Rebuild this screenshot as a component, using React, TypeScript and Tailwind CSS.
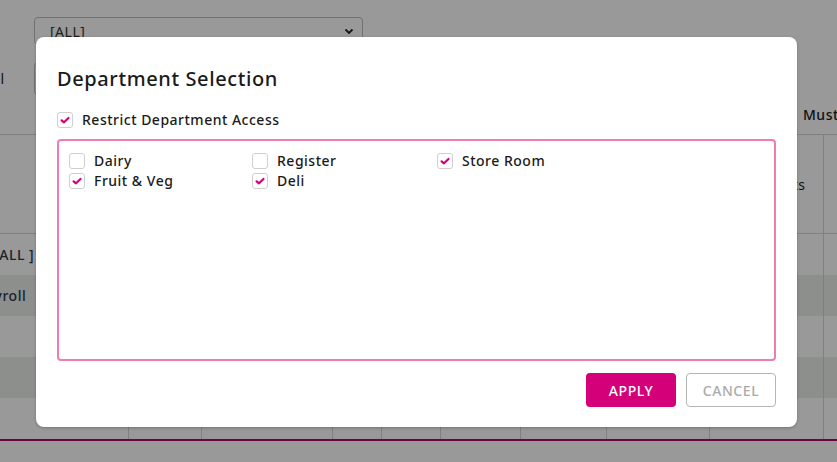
import React from 'react';

const font = { fontFamily: '"Noto Sans", "Open Sans", sans-serif' };

const departments = [
  { name: 'Dairy', checked: false },
  { name: 'Register', checked: false },
  { name: 'Store Room', checked: true },
  { name: 'Fruit & Veg', checked: true },
  { name: 'Deli', checked: true },
];

const columns = [129, 73, 131, 49, 59, 80, 86, 103, 114, 40];

const rows = [
  { label: '[ ALL ]', shade: false },
  { label: 'Payroll', shade: true },
  { label: '', shade: false },
  { label: '', shade: true },
  { label: '', shade: false },
];

function Check({ checked }: { checked: boolean }) {
  return (
    <span className="w-[16px] h-[16px] shrink-0 rounded-[3px] border border-[#cfcfcf] bg-white flex items-center justify-center">
      {checked && (
        <svg width="12" height="12" viewBox="0 0 12 12" fill="none">
          <path d="M2.6 6.3 L5 8.3 L9.5 4" stroke="#d4007a" strokeWidth="2.2" strokeLinecap="round" strokeLinejoin="round" />
        </svg>
      )}
    </span>
  );
}

function BackgroundPage() {
  return (
    <div className="h-[462px] bg-white text-[14px] text-[#222]" style={font}>
      {/* Filters */}
      <div className="pt-[17px] pl-[34px]">
        <div className="w-[329px] h-[28px] border border-[#bdbdbd] rounded-[4px] flex items-center justify-between pl-[15px] pr-[8px]">
          <span className="text-[#333] tracking-[0.5px]">[ALL]</span>
          <svg width="10" height="10" viewBox="0 0 10 10" fill="none">
            <path d="M1.5 3.5 L5 7 L8.5 3.5" stroke="#222" strokeWidth="1.8" />
          </svg>
        </div>
      </div>
      <div className="flex items-center mt-[17px] h-[33px]">
        <div className="w-[4px] flex justify-end overflow-hidden whitespace-nowrap">
          <span>Level</span>
        </div>
        <div className="ml-[30px] w-[329px] h-[33px] border border-[#bdbdbd] rounded-[4px]" />
      </div>
      <div className="h-[39px] flex items-center pl-[803px] whitespace-nowrap font-medium tracking-[0.5px]">Must Work</div>

      {/* Table */}
      <div className="border-t border-[#d5d5d5]">
        <div className="flex h-[99px] border-b border-[#d5d5d5]">
          {columns.map((w, i) => (
            <div
              key={i}
              style={{ width: w }}
              className={`shrink-0 flex items-center justify-center text-center whitespace-nowrap tracking-[0.5px] ${i < columns.length - 1 ? 'border-r border-[#d5d5d5]' : ''}`}
            >
              {i === 8 ? 'Total Shifts' : ''}
            </div>
          ))}
        </div>
        {rows.map((r, ri) => (
          <div key={ri} className={`flex h-[41px] ${r.shade ? 'bg-[#eceeeb]' : 'bg-white'}`}>
            {columns.map((w, i) => (
              <div
                key={i}
                style={{ width: w }}
                className={`shrink-0 flex items-center overflow-hidden whitespace-nowrap ${i < columns.length - 1 ? 'border-r border-[#d5d5d5]' : ''}`}
              >
                {i === 0 && (
                  <span className={`${r.label === 'Payroll' ? '-ml-[23px]' : '-ml-[10px]'} text-[#2b3a50] font-medium tracking-[0.5px]`}>
                    {r.label}
                  </span>
                )}
              </div>
            ))}
          </div>
        ))}
        <div className="h-[2px] bg-[#b0096a]" />
      </div>
    </div>
  );
}

export default function App() {
  return (
    <div className="relative w-[837px] h-[462px] overflow-hidden">
      <BackgroundPage />
      <div className="absolute inset-0 bg-black/40" />

      {/* Modal */}
      <div
        className="absolute left-[36px] top-[37px] w-[761px] h-[390px] bg-white rounded-[8px] shadow-[0_1px_3px_rgba(0,0,0,0.25)] px-[21px] pt-[28px] text-[#1a1a1a]"
        style={font}
      >
        <h2 className="text-[20px] leading-[28px] font-medium tracking-[0.6px]">Department Selection</h2>

        <label className="mt-[19px] flex items-center gap-[9px] text-[14px] leading-[16px] font-medium tracking-[0.5px]">
          <Check checked />
          <span>Restrict Department Access</span>
        </label>

        <div className="mt-[11px] h-[222px] border-2 border-[#ee7db3] rounded-[4px] pt-[12px] pl-[10px]">
          <div className="grid grid-cols-[183px_185px_1fr] gap-y-[4px]">
            {departments.map((d) => (
              <label key={d.name} className="flex items-center gap-[9px] text-[14px] leading-[16px] font-medium tracking-[0.5px]">
                <Check checked={d.checked} />
                <span>{d.name}</span>
              </label>
            ))}
          </div>
        </div>

        <div className="mt-[12px] flex justify-end gap-[10px]">
          <button className="w-[90px] h-[34px] rounded-[4px] bg-[#d4007a] text-white text-[14px] font-medium tracking-[0.6px]">
            APPLY
          </button>
          <button className="w-[90px] h-[34px] rounded-[4px] border border-[#b5b5b5] bg-white text-[#aaaaaa] text-[14px] font-medium tracking-[0.6px]">
            CANCEL
          </button>
        </div>
      </div>
    </div>
  );
}
